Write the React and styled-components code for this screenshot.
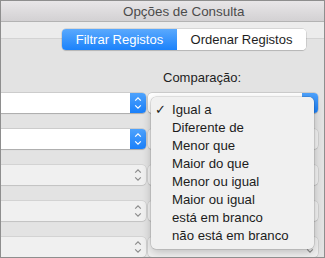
import React from 'react';
import styled, { createGlobalStyle } from 'styled-components';

const Global = createGlobalStyle`
  html, body { margin: 0; padding: 0; background: #fff; }
  body { font-family: "Liberation Sans", Arial, sans-serif; }
`;

const Window = styled.div`
  position: relative;
  width: 325px;
  height: 258px;
  box-sizing: border-box;
  border: 1px solid #8e8e8e;
  overflow: hidden;
  display: flex;
  flex-direction: column;
  background: #e3e3e3;
`;

const TitleBar = styled.div`
  height: 20px;
  line-height: 21px;
  padding-left: 122px;
  font-size: 13.4px;
  color: #4b4b4b;
  background: linear-gradient(#e8e6e8, #d3d1d3);
  border-bottom: 1px solid #b3b3b3;
`;

const Toolbar = styled.div`
  height: 22px;
  background: #ececec;
  border-bottom: 1px solid #d3d3d3;
`;

const Body = styled.div`
  flex: 1;
  display: flex;
  flex-direction: column;
`;

const Tabs = styled.div`
  display: flex;
  margin: -10px 0 0 61px;
  width: 244px;
  height: 21px;
  border-radius: 4px;
  background: #fff;
  box-shadow: 0 0 0 0.5px rgba(0, 0, 0, 0.18), 0 1px 1px rgba(0, 0, 0, 0.12);
  overflow: hidden;
  font-size: 13px;
`;

const Tab = styled.div`
  display: flex;
  align-items: center;
  justify-content: center;
  width: ${p => p.$w}px;
  color: ${p => (p.$on ? '#fff' : '#1e1e1e')};
  background: ${p => (p.$on ? 'linear-gradient(#5aa9fd, #1b82fb)' : '#fff')};
`;

const Label = styled.div`
  margin: 20px 0 0 162px;
  height: 16px;
  line-height: 16px;
  font-size: 13px;
  color: #1e1e1e;
`;

const Grid = styled.div`
  display: grid;
  grid-template-columns: 156px 170px;
  column-gap: 2px;
  row-gap: 16px;
  margin: 7px 0 0 -11px;
`;

const Popup = styled.div`
  position: relative;
  height: 20px;
  box-sizing: border-box;
  border-radius: 4px;
  background: ${p => (p.$off ? '#f0f0f0' : '#fff')};
  box-shadow: 0 0 0 0.5px rgba(0, 0, 0, ${p => (p.$off ? 0.14 : 0.2)}),
    0 1px 1px rgba(0, 0, 0, ${p => (p.$off ? 0.08 : 0.16)});
  display: flex;
  justify-content: flex-end;
`;

const Stepper = styled.div`
  width: 16px;
  height: 100%;
  border-radius: 0 4px 4px 0;
  background: ${p => (p.$off ? 'transparent' : 'linear-gradient(#4ea2fc, #1a80fa)')};
  display: flex;
  align-items: center;
  justify-content: center;
`;

const Menu = styled.div`
  position: absolute;
  left: 150px;
  top: 96px;
  width: 163px;
  height: 152px;
  box-sizing: border-box;
  padding-top: 3px;
  border-radius: 5px;
  background: #f0f0f0;
  box-shadow: 0 0 0 0.5px rgba(0, 0, 0, 0.18), 0 3px 10px rgba(0, 0, 0, 0.22);
`;

const Item = styled.div`
  display: flex;
  align-items: center;
  height: 18px;
  font-size: 13.2px;
  color: #1c1c1c;
`;

const Check = styled.span`
  width: 21px;
  padding-left: 4px;
  box-sizing: border-box;
  font-family: "DejaVu Sans", sans-serif;
  font-size: 13px;
  font-weight: bold;
`;

function Chevrons({ off }) {
  const c = off ? '#8b8b8b' : '#fff';
  return (
    <svg width="8" height="14" viewBox="0 0 8 14">
      <path d="M1.2 4.6 L4 1.8 L6.8 4.6" fill="none" stroke={c} strokeWidth="1.2" />
      <path d="M1.2 9.4 L4 12.2 L6.8 9.4" fill="none" stroke={c} strokeWidth="1.2" />
    </svg>
  );
}

function Select({ off }) {
  return (
    <Popup $off={off}>
      <Stepper $off={off}>
        <Chevrons off={off} />
      </Stepper>
    </Popup>
  );
}

const rows = [
  [false, false],
  [false, true],
  [true, true],
  [true, true],
  [true, true],
];

const options = [
  'Igual a',
  'Diferente de',
  'Menor que',
  'Maior do que',
  'Menor ou igual',
  'Maior ou igual',
  'está em branco',
  'não está em branco',
];

export default function App() {
  return (
    <>
      <Global />
      <Window>
        <TitleBar>Opções de Consulta</TitleBar>
        <Toolbar />
        <Body>
          <Tabs>
            <Tab $on $w={115}>Filtrar Registos</Tab>
            <Tab $w={129}>Ordenar Registos</Tab>
          </Tabs>
          <Label>Comparação:</Label>
          <Grid>
            {rows.map(([a, b], i) => (
              <React.Fragment key={i}>
                <Select off={a} />
                <Select off={b} />
              </React.Fragment>
            ))}
          </Grid>
        </Body>
        <Menu>
          {options.map((o, i) => (
            <Item key={o}>
              <Check>{i === 0 ? '✓' : ''}</Check>
              {o}
            </Item>
          ))}
        </Menu>
      </Window>
    </>
  );
}
